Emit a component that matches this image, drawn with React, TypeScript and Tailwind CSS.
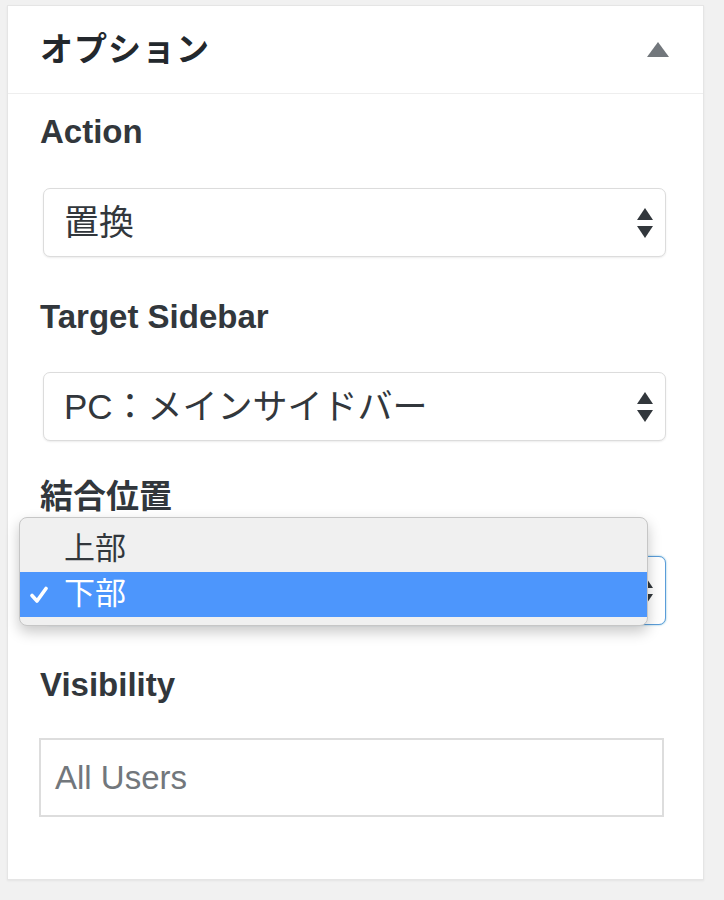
import React from "react";

const FONT = "font-['Liberation_Sans','Noto_Sans_CJK_JP',sans-serif]";

function Arrows({ className = "" }: { className?: string }) {
  return (
    <svg width="16" height="30" viewBox="0 0 16 30" className={className}>
      <path d="M8 0 L16 12 L0 12 Z" fill="#32373c" />
      <path d="M0 18 L16 18 L8 30 Z" fill="#32373c" />
    </svg>
  );
}

function Label({ children }: { children: React.ReactNode }) {
  return (
    <div className="h-10 leading-10 pl-[1px] text-[33px] font-bold text-[#32373c]">{children}</div>
  );
}

// the open select's own value sits under the popup, so it is left blank
function FakeSelect({ value, focused = false }: { value?: string; focused?: boolean }) {
  return (
    <div
      className={
        "ml-[4px] w-[623px] h-[69px] flex items-center justify-between pl-[20px] pr-[12px] rounded-[7px] bg-white border " +
        (focused
          ? "border-[#5b9dd9] shadow-[0_0_2px_rgba(30,140,190,0.6)]"
          : "border-[#dcdcdc] shadow-[0_1px_2px_rgba(0,0,0,0.08)]")
      }
    >
      <span className="text-[35px] text-[#32373c] leading-none">{value}</span>
      <Arrows />
    </div>
  );
}

function Dropdown() {
  return (
    <div className="w-[629px] h-[109px] rounded-[8px] bg-[#f0f0f0] border border-[#c6c6c6] shadow-[0_6px_14px_rgba(0,0,0,0.22)] pt-[9px] overflow-hidden">
      <div className="h-[45px] flex items-center pl-[44px] text-[31px] text-[#32373c]">上部</div>
      <div className="h-[45px] flex items-center bg-[#4d96fc] text-white">
        <svg width="44" height="18" viewBox="0 0 44 18" className="shrink-0">
          <path d="M12 9.5 L17 15 L26 2.5" fill="none" stroke="#ffffff" strokeWidth="3.6" strokeLinecap="round" strokeLinejoin="round" />
        </svg>
        <span className="text-[31px]">下部</span>
      </div>
    </div>
  );
}

export default function App() {
  return (
    <div className={"min-h-[900px] bg-[#f1f1f1] pt-[5px] " + FONT}>
      <div className="ml-[7px] w-[697px] h-[875px] bg-white border border-[#e5e5e5] shadow-[0_1px_2px_rgba(0,0,0,0.06)]">
        <div className="h-[88px] flex items-center justify-between pl-[32px] pr-[34px] border-b border-[#eeeeee]">
          <span className="text-[33px] font-bold text-[#23282d] tracking-[1px]">オプション</span>
          <svg width="22" height="15" viewBox="0 0 22 15">
            <path d="M11 0 L22 15 L0 15 Z" fill="#72777c" />
          </svg>
        </div>
        <div className="pl-[31px] pt-[18px]">
          <Label>Action</Label>
          <div className="mt-[36px]">
            <FakeSelect value="置換" />
          </div>
          <div className="mt-[40px]">
            <Label>Target Sidebar</Label>
          </div>
          <div className="mt-[35px]">
            <FakeSelect value="PC：メインサイドバー" />
          </div>
          <div className="mt-[36px] relative">
            <Label>結合位置</Label>
            <div className="mt-[39px]">
              <FakeSelect focused />
            </div>
            <div className="absolute left-[-20px] top-[40px]">
              <Dropdown />
            </div>
          </div>
          <div className="mt-[40px]">
            <Label>Visibility</Label>
          </div>
          <div className="mt-[33px] w-[625px] h-[79px] border-2 border-[#dddddd] flex items-center pl-[14px]">
            <span className="text-[33px] text-[#72777c]">All Users</span>
          </div>
        </div>
      </div>
    </div>
  );
}
